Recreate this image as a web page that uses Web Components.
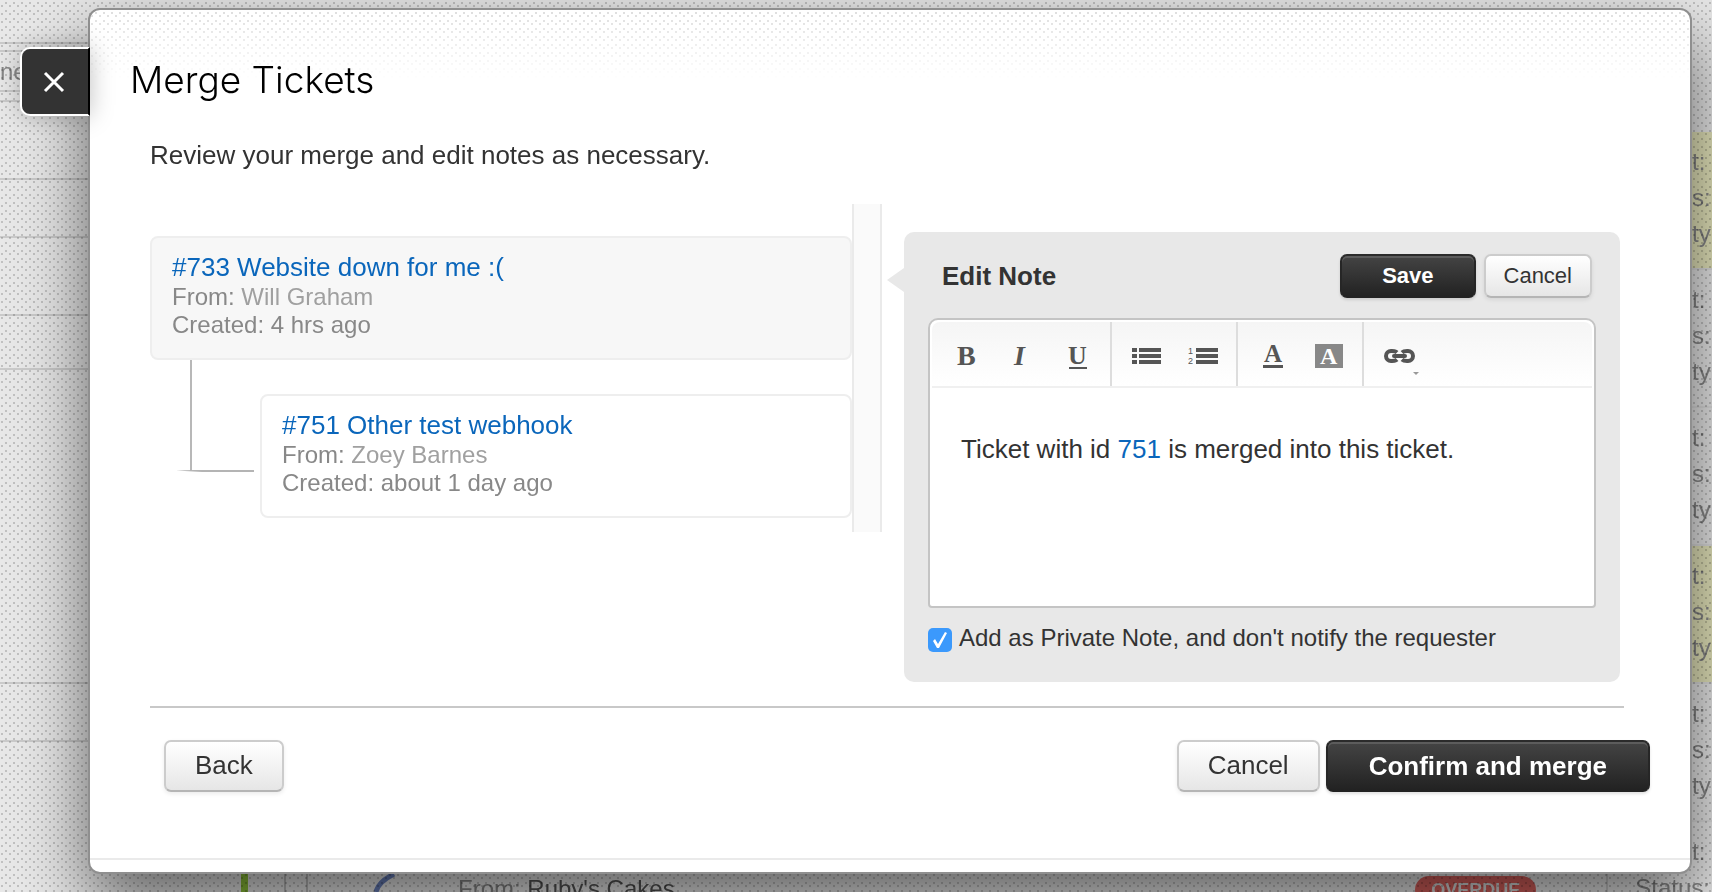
<!DOCTYPE html>
<html lang="en">
<head>
<meta charset="utf-8">
<title>Merge Tickets</title>
<style>
  body {
    margin: 0;
    min-height: 100vh;
    overflow: hidden;
    font-family: "Liberation Sans", Arial, sans-serif;
    color: #333;
    background-color: #e8e8e8;
  }
</style>
</head>
<body>
<ticket-backdrop></ticket-backdrop>
<merge-dialog heading="Merge Tickets">
  <p slot="intro">Review your merge and edit notes as necessary.</p>
  <ticket-card slot="tickets" class="primary" number="733" subject="Website down for me :(" from="Will Graham" created="4 hrs ago"></ticket-card>
  <ticket-card slot="tickets" nested number="751" subject="Other test webhook" from="Zoey Barnes" created="about 1 day ago"></ticket-card>
  <note-editor slot="note">Ticket with id <a href="#751">751</a> is merged into this ticket.</note-editor>
  <action-button slot="back">Back</action-button>
  <action-button slot="actions">Cancel</action-button>
  <action-button slot="actions" primary>Confirm and merge</action-button>
</merge-dialog>

<script>
class TicketBackdrop extends HTMLElement {
  constructor() {
    super();
    this.attachShadow({ mode: "open" });
  }

  connectedCallback() {
    const group = (mark) => `<div class="group ${mark}"><span>t:</span><span>s:</span><span>ty</span></div>`;
    this.shadowRoot.innerHTML = `
      <style>
        :host {
          position: fixed;
          inset: 0;
          display: flex;
          justify-content: space-between;
          overflow: hidden;
          font-size: 24px;
          color: #888;
        }
        .rows { width: 88px; }
        .rows div {
          box-sizing: border-box;
          border-bottom: 2px solid #cacaca;
        }
        .toolbar { line-height: 40px; }
        .props { width: 20px; padding-top: 132px; }
        .group {
          box-sizing: border-box;
          height: 138px;
          padding-top: 12px;
          border-bottom: 2px solid #dedede;
        }
        .group span { display: block; line-height: 36px; }
        .due { background: #e6e6bc; }
        .next {
          position: absolute;
          left: 241px;
          right: 0;
          bottom: 0;
          height: 18px;
          display: flex;
          align-items: flex-start;
          white-space: nowrap;
        }
        .flag { width: 7px; height: 18px; background: #8fc33a; }
        .tick {
          box-sizing: border-box;
          width: 24px;
          height: 18px;
          margin-left: 36px;
          border: solid #bbb;
          border-width: 0 2px;
        }
        .avatar { margin-left: 66px; }
        .from { margin-left: 62px; line-height: 30px; }
        .from b { font-weight: normal; color: #555; }
        .badge {
          margin: 2px 70px 0 auto;
          padding: 0 16px;
          border-radius: 14px;
          font-size: 18px;
          font-weight: bold;
          line-height: 28px;
          color: #ddd;
          background: #d9625e;
        }
        .edge { width: 2px; height: 18px; background: #ccc; }
        .status { margin-left: 27px; padding-right: 2px; line-height: 28px; }
        .dots {
          position: absolute;
          inset: 0;
          width: 100%;
          height: 100%;
        }
      </style>
      <div class="rows">
        <div style="height:44px"></div>
        <div style="height:8px"></div>
        <div class="toolbar" style="height:40px">ne</div>
        <div style="height:10px"></div>
        <div style="height:78px"></div>
        <div style="height:58px"></div>
        <div style="height:78px"></div>
        <div style="height:54px"></div>
        <div style="height:314px"></div>
        <div style="height:58px"></div>
      </div>
      <div class="props">
        ${group("due")}${group("")}${group("")}${group("due")}${group("")}
        <div class="group"><span>t:</span></div>
      </div>
      <div class="next">
        <span class="flag"></span>
        <span class="tick"></span>
        <svg class="avatar" width="22" height="18" viewBox="0 0 22 18"><path d="M2 18Q4 8 20 0" fill="none" stroke="#6a80bb" stroke-width="5"/></svg>
        <span class="from">From: <b>Ruby's Cakes</b></span>
        <span class="badge">OVERDUE</span>
        <span class="edge"></span>
        <span class="status">Status:</span>
      </div>
      <svg class="dots" aria-hidden="true">
        <defs>
          <pattern id="dot" width="8" height="8" patternUnits="userSpaceOnUse">
            <rect x="1" y="5" width="2" height="2"/><rect x="5" y="2" width="2" height="2"/>
          </pattern>
        </defs>
        <rect width="100%" height="100%" fill="url(#dot)" opacity="0.17"/>
      </svg>
    `;
  }
}

class ActionButton extends HTMLElement {
  constructor() {
    super();
    this.attachShadow({ mode: "open" });
  }

  connectedCallback() {
    this.shadowRoot.innerHTML = `
      <style>
        :host { display: block; }
        button {
          display: block;
          box-sizing: border-box;
          height: 52px;
          padding: 0 29px 2px;
          border: 2px solid #ccc;
          border-bottom-color: #b5b5b5;
          border-radius: 7px;
          font: 26px "Liberation Sans", Arial, sans-serif;
          color: #333;
          background: linear-gradient(#fff, #e6e6e6);
          box-shadow: 0 2px 4px rgba(0, 0, 0, 0.08);
          cursor: pointer;
        }
        :host([small]) button {
          height: 44px;
          padding: 0 18px;
          font-size: 22px;
        }
        :host([primary]) button {
          padding: 0 41px;
          border-color: #2b2b2b #262626 #222;
          font-weight: bold;
          color: #fff;
          background: linear-gradient(#444, #222);
          box-shadow: inset 0 2px 0 #5c5c5c, 0 2px 3px rgba(0, 0, 0, 0.12);
        }
        :host([small][primary]) button { padding: 0 40px; }
      </style>
      <button type="button"><slot></slot></button>
    `;
  }
}

class TicketCard extends HTMLElement {
  constructor() {
    super();
    this.attachShadow({ mode: "open" });
  }

  connectedCallback() {
    const number = this.getAttribute("number");
    this.shadowRoot.innerHTML = `
      <style>
        :host { display: flex; }
        :host(.primary) article { background: #f7f7f7; }
        .branch { display: none; }
        :host([nested]) .branch { display: block; flex: none; margin: 0 6px 0 26px; }
        article {
          box-sizing: border-box;
          flex: 1;
          height: 124px;
          padding: 13px 20px;
          border: 2px solid #eee;
          border-radius: 8px;
          font-size: 24px;
          line-height: 28px;
          color: #888;
        }
        :host([nested]) article { margin-top: 34px; }
        a {
          display: block;
          font-size: 26px;
          line-height: 32px;
          color: #0a66bb;
          text-decoration: none;
        }
        .name { color: #a0a0a0; }
      </style>
      <svg class="branch" width="78" height="112" viewBox="0 0 78 112" aria-hidden="true">
        <path d="M15 0V111" fill="none" stroke="#b8b8b8" stroke-width="2"/>
        <path d="M0 110.500L18 110H78V112H26Z" fill="#b4b4b4"/>
      </svg>
      <article>
        <a href="#${number}">#${number} ${this.getAttribute("subject")}</a>
        <div>From: <span class="name">${this.getAttribute("from")}</span></div>
        <div>Created: ${this.getAttribute("created")}</div>
      </article>
    `;
  }
}

class NoteEditor extends HTMLElement {
  constructor() {
    super();
    this.attachShadow({ mode: "open" });
  }

  connectedCallback() {
    this.shadowRoot.innerHTML = `
      <style>
        :host {
          position: relative;
          display: block;
          padding: 22px 24px 30px;
          border-radius: 10px;
          background: #e8e8e8;
        }
        .arrow {
          position: absolute;
          top: 36px;
          left: -17px;
        }
        header {
          display: flex;
          gap: 8px;
          align-items: center;
          padding: 0 4px 0 14px;
        }
        h2 { flex: 1; margin: 0; font-size: 26px; line-height: 32px; }
        .box {
          box-sizing: border-box;
          height: 290px;
          margin-top: 20px;
          padding: 2px;
          border: 2px solid #c4c4c4;
          border-radius: 10px 10px 4px 4px;
          background: #fff;
        }
        .tools {
          display: flex;
          height: 64px;
          border-bottom: 2px solid #f0f0f0;
          border-radius: 8px 8px 0 0;
          background: linear-gradient(#f5f5f5, #fff);
        }
        .set { display: flex; border-right: 2px solid #ddd; }
        .set:last-child { border: 0; }
        .tools button {
          display: flex;
          align-items: center;
          justify-content: center;
          width: 56px;
          padding: 4px 0 0 2px;
          border: 0;
          font: bold 28px "Liberation Serif", "Times New Roman", serif;
          color: #555;
          background: none;
        }
        .tools svg { fill: currentColor; }
        .styles { padding: 0 5px; }
        .pair { padding: 0 6px; }
        .link { padding: 0 8px; }
        .text {
          padding: 45px 29px;
          font-size: 26px;
          line-height: 32px;
          outline: none;
        }
        ::slotted(a) { color: #0a66bb; text-decoration: none; }
        label {
          display: flex;
          gap: 7px;
          align-items: center;
          margin-top: 16px;
          font-size: 24px;
          line-height: 28px;
        }
        input {
          appearance: none;
          flex: none;
          width: 24px;
          height: 24px;
          margin: 4px 0 0;
          border-radius: 5px;
          background: #3b99fc;
          display: grid;
          place-items: center;
        }
        input:checked::before {
          content: "";
          width: 14px;
          height: 18px;
          background: #fff;
          clip-path: path("M0 10L2 8L5 13L12 1L14 2L6 17L4 17Z");
        }
      </style>
      <svg class="arrow" width="17" height="24" viewBox="0 0 17 24" aria-hidden="true"><path d="M17 0V24L0 12Z" fill="#e8e8e8"/></svg>
      <header>
        <h2>Edit Note</h2>
        <action-button small primary>Save</action-button>
        <action-button small>Cancel</action-button>
      </header>
      <div class="box">
        <div class="tools">
          <div class="set styles">
            <button type="button" aria-label="Bold"><svg width="20" height="28" viewBox="0 0 20 28"><text x="1" y="23">B</text></svg></button>
            <button type="button" aria-label="Italic"><svg width="20" height="28" viewBox="0 0 20 28"><text x="2" y="23" font-style="italic">I</text></svg></button>
            <button type="button" aria-label="Underline"><svg width="20" height="28" viewBox="0 0 20 28"><text x="0" y="22" font-size="26">U</text><rect x="1" y="25" width="18" height="2"/></svg></button>
          </div>
          <div class="set pair">
            <button type="button" aria-label="Bulleted list">
              <svg width="30" height="18" viewBox="0 0 30 18"><path d="M0 1h5v4H0zM0 7h5v4H0zM0 13h5v4H0zM7 1h22v4H7zM7 7h22v4H7zM7 13h22v4H7z"/></svg>
            </button>
            <button type="button" aria-label="Numbered list">
              <svg width="30" height="18" viewBox="0 0 30 18"><path d="M8 1h22v4H8zM8 7h22v4H8zM8 13h22v4H8z"/><g font-family="Liberation Sans" font-size="9" font-weight="normal"><text x="0" y="7">1</text><text x="0" y="17">2</text></g></svg>
            </button>
          </div>
          <div class="set pair">
            <button type="button" aria-label="Text color"><svg width="20" height="28" viewBox="0 0 20 28"><text x="1" y="20" font-size="25">A</text><rect y="23" width="20" height="3"/></svg></button>
            <button type="button" aria-label="Background color"><svg width="28" height="24" viewBox="0 0 28 24"><rect width="28" height="24" fill="#888"/><text x="5" y="20" font-size="24" fill="#fff">A</text></svg></button>
          </div>
          <div class="set link">
            <button type="button" aria-label="Insert link">
              <svg width="38" height="40" viewBox="0 -3 38 40"><g fill="none" stroke="#555" stroke-width="4"><path d="M15 20.500Q13.500 22 10 22H9A5 5 0 0 1 9 12H10Q13.500 12 15 13.500M20 13.500Q21.500 12 25 12H26A5 5 0 0 1 26 22H25Q21.500 22 20 20.500"/><path d="M12 17H23" stroke-linecap="round"/></g><path d="M31 33h6l-3 3z" fill="#999"/></svg>
            </button>
          </div>
        </div>
        <div class="text" contenteditable="true" role="textbox" aria-label="Note"><slot></slot></div>
      </div>
      <label><input type="checkbox" checked>Add as Private Note, and don't notify the requester</label>
    `;
  }
}

class MergeDialog extends HTMLElement {
  constructor() {
    super();
    this.attachShadow({ mode: "open" });
  }

  connectedCallback() {
    this.shadowRoot.innerHTML = `
      <style>
        :host {
          position: relative;
          display: block;
          margin: 8px 20px 18px 88px;
          border: 2px solid #8f8f8f;
          border-radius: 12px;
          background: #fff;
          box-shadow: 0 30px 70px rgba(0, 0, 0, 0.6);
        }
        .dots {
          position: absolute;
          top: 0;
          left: 0;
          width: 100%;
          height: 70px;
          border-radius: 10px 10px 0 0;
          mask-image: linear-gradient(#000, transparent);
        }
        .close {
          position: absolute;
          top: 37px;
          left: -70px;
          box-sizing: border-box;
          width: 70px;
          height: 69px;
          padding: 0 0 0 20px;
          border: 2px solid #fff;
          border-right: 2px solid #000;
          border-radius: 10px 0 0 10px;
          background: #333;
          text-align: left;
          box-shadow: 0 0 24px rgba(0, 0, 0, 0.25);
        }
        .close svg { display: block; }
        h1 {
          position: relative;
          margin: 0;
          padding: 45px 40px 0;
          font: 300 37px/50px Inter, "Liberation Sans", sans-serif;
          color: #000;
        }
        .body { padding: 33px 66px 0 60px; }
        ::slotted(p) { margin: 0; font-size: 26px; line-height: 34px; }
        .columns {
          display: grid;
          grid-template-columns: 732fr 716fr;
          column-gap: 22px;
          padding: 32px 4px 24px 0;
          align-items: start;
        }
        .tickets { display: flex; }
        .list { flex: 1; padding-top: 32px; }
        .rail {
          box-sizing: border-box;
          width: 30px;
          height: 328px;
          border: solid #eaeaea;
          border-width: 0 2px;
          background: #fafafa;
        }
        .note { padding-top: 28px; }
        hr { margin: 0; border: 0; border-top: 2px solid #c8c8c8; }
        footer {
          display: flex;
          justify-content: space-between;
          padding: 32px 40px 66px 74px;
        }
        .actions { display: flex; gap: 6px; }
        .foot { height: 12px; border-top: 2px solid #eaeaea; }
      </style>
      <svg class="dots" aria-hidden="true">
        <defs>
          <pattern id="dot" width="8" height="8" patternUnits="userSpaceOnUse">
            <rect x="1" y="5" width="2" height="2"/><rect x="5" y="2" width="2" height="2"/>
          </pattern>
        </defs>
        <rect width="100%" height="100%" fill="url(#dot)" opacity="0.13"/>
      </svg>
      <button class="close" type="button" aria-label="Close">
        <svg width="24" height="24" viewBox="0 0 24 24"><path d="M3 3L21 21M21 3L3 21" stroke="#fff" stroke-width="3"/></svg>
      </button>
      <h1>${this.getAttribute("heading")}</h1>
      <div class="body">
        <slot name="intro"></slot>
        <div class="columns">
          <div class="tickets">
            <div class="list"><slot name="tickets"></slot></div>
            <div class="rail"></div>
          </div>
          <div class="note"><slot name="note"></slot></div>
        </div>
        <hr>
      </div>
      <footer>
        <slot name="back"></slot>
        <div class="actions"><slot name="actions"></slot></div>
      </footer>
      <div class="foot"></div>
    `;
  }
}

customElements.define("ticket-backdrop", TicketBackdrop);
customElements.define("action-button", ActionButton);
customElements.define("ticket-card", TicketCard);
customElements.define("note-editor", NoteEditor);
customElements.define("merge-dialog", MergeDialog);
</script>
</body>
</html>
